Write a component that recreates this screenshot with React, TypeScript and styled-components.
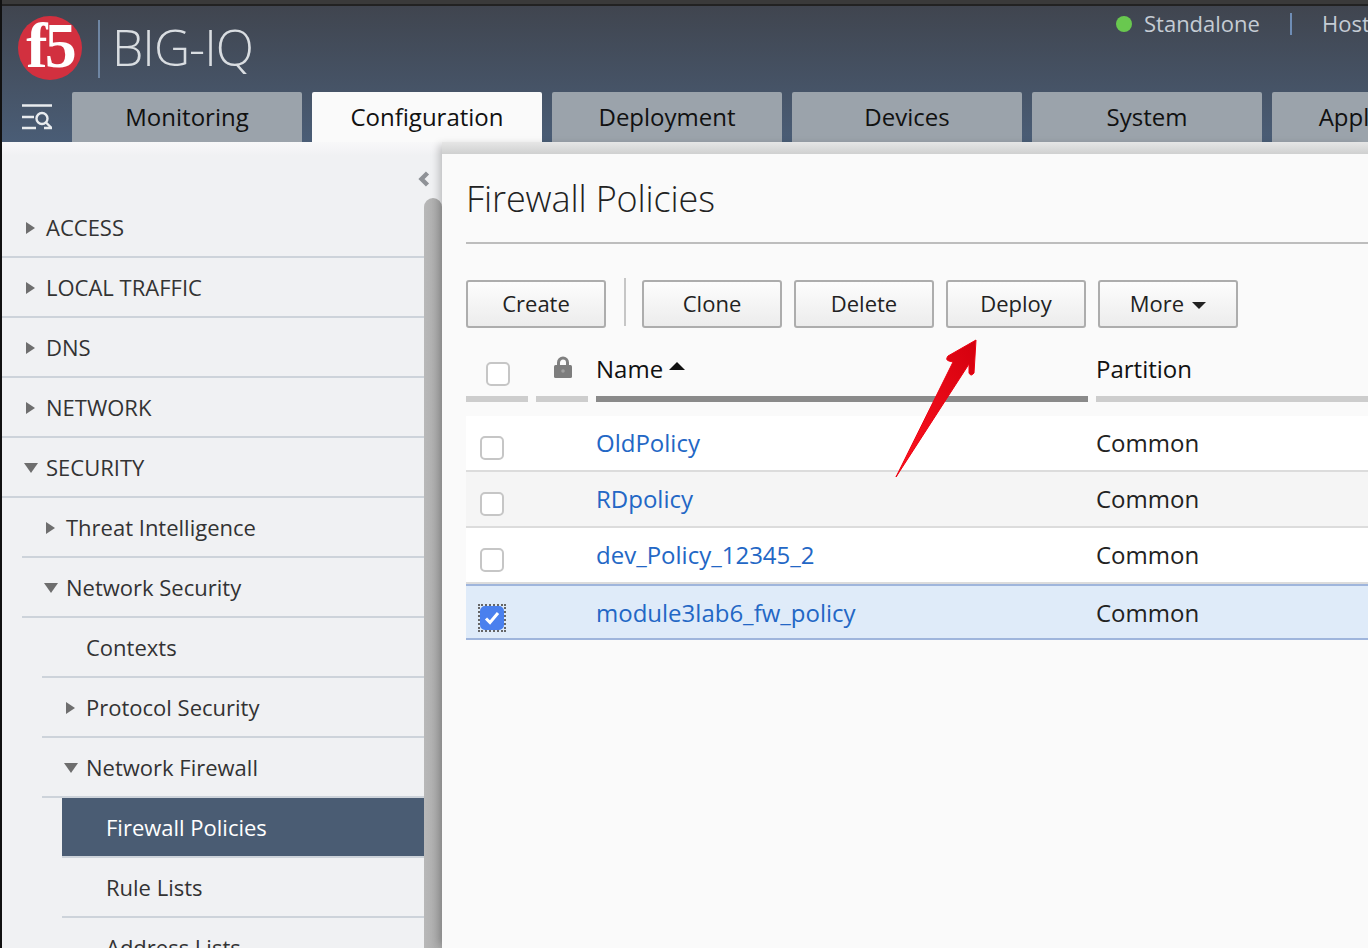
import styled, { createGlobalStyle } from "styled-components";

const GlobalStyle = createGlobalStyle`
  html, body {
    margin: 0;
    padding: 0;
    background: #fafafa;
    font-family: "Open Sans", "Noto Sans", sans-serif;
  }
  * {
    box-sizing: border-box;
  }
`;

const Page = styled.div`
  position: relative;
  width: 1368px;
  height: 948px;
  overflow: hidden;
  display: flex;
  flex-direction: column;
  border-left: 2px solid #111;
`;

const TopEdge = styled.div`
  flex: 0 0 6px;
  background: linear-gradient(#3a3a3a 0, #3a3a3a 60%, #222 60%, #222 100%);
`;

const Header = styled.header`
  flex: 0 0 136px;
  display: flex;
  flex-direction: column;
  background: linear-gradient(#40454f, #4a5d76);
`;

const HeaderTop = styled.div`
  flex: 0 0 86px;
  display: flex;
`;

const Brand = styled.div`
  flex: 0 0 1114px;
  display: flex;
  align-items: flex-start;
  padding: 10px 0 0 16px;
`;

const LogoCircle = styled.div`
  width: 64px;
  height: 64px;
  border-radius: 50%;
  background: #d2303f;
  color: #fff;
  font-family: "Liberation Serif", serif;
  font-weight: 700;
  font-size: 64px;
  letter-spacing: -3px;
  line-height: 60px;
  text-align: center;
`;

const BrandDivider = styled.div`
  width: 2px;
  height: 58px;
  margin: 4px 0 0 16px;
  background: #6f86a3;
`;

const BrandName = styled.div`
  margin-left: 12px;
  font-size: 50px;
  font-weight: 300;
  line-height: 62px;
  letter-spacing: -1px;
  color: #d9dde1;
`;

const Status = styled.div`
  display: flex;
  align-items: center;
  height: 24px;
  margin-top: 5px;
  color: #c5ccd4;
  font-size: 22px;
  white-space: nowrap;
`;

const StatusDot = styled.span`
  width: 16px;
  height: 16px;
  border-radius: 50%;
  background: #69c84f;
  margin: 2px 12px 0 0;
`;

const StatusDivider = styled.span`
  width: 2px;
  height: 22px;
  margin: 2px 30px 0;
  background: #6f8db5;
`;

const TabBar = styled.nav`
  flex: 0 0 50px;
  display: flex;
  gap: 10px;
`;

const MenuButton = styled.div`
  flex: 0 0 60px;
  padding: 12px 0 0 20px;
`;

const Tab = styled.div<{ $active?: boolean }>`
  flex: 0 0 230px;
  height: 50px;
  border-radius: 2px 2px 0 0;
  background: ${(p) => (p.$active ? "#fafafa" : "#9ba3ab")};
  color: #111;
  font-size: 24px;
  line-height: 50px;
  text-align: center;
  white-space: nowrap;
`;

const Body = styled.div`
  flex: 1;
  display: flex;
  min-height: 0;
`;

const Sidebar = styled.aside`
  flex: 0 0 440px;
  display: flex;
  flex-direction: column;
  background: linear-gradient(#f8f8f9 0, #f0f1f3 14px);
`;

const CollapseBar = styled.div`
  flex: 0 0 56px;
  display: flex;
  justify-content: flex-end;
  padding: 29px 12px 0 0;
`;

const SidebarBody = styled.div`
  flex: 1;
  display: flex;
  min-height: 0;
`;

const Nav = styled.div`
  flex: 0 0 422px;
  overflow: hidden;
`;

const NavRow = styled.div<{ $level: number; $selected?: boolean }>`
  display: flex;
  align-items: center;
  height: 60px;
  margin-left: ${(p) => p.$level * 20}px;
  padding-left: 24px;
  border-bottom: 2px solid #cdd3da;
  background: ${(p) => (p.$selected ? "#4a5c73" : "transparent")};
  color: ${(p) => (p.$selected ? "#fff" : "#333")};
  font-size: 22px;
  white-space: nowrap;
`;

const CaretSlot = styled.span`
  flex: 0 0 20px;
  display: flex;
  align-items: center;
  padding-top: 2px;
`;

const Caret = styled.span<{ $open?: boolean }>`
  width: 0;
  height: 0;
  ${(p) =>
    p.$open
      ? `
    margin-left: -2px;
    border-left: 7px solid transparent;
    border-right: 7px solid transparent;
    border-top: 10px solid #6e6e6e;
  `
      : `
    border-top: 6px solid transparent;
    border-bottom: 6px solid transparent;
    border-left: 9px solid #6e6e6e;
  `}
`;

const ScrollThumb = styled.div`
  flex: 0 0 18px;
  border-radius: 9px 9px 0 0;
  background: linear-gradient(90deg, #b8b8b8, #a9a9a9);
`;

const Panel = styled.main`
  flex: 1;
  min-width: 0;
  display: flex;
  flex-direction: column;
  background: #fafafa;
  box-shadow: -6px 0 8px -3px rgba(0, 0, 0, 0.22);
`;

const PanelTopShade = styled.div`
  flex: 0 0 12px;
  background: linear-gradient(#e6e6e6, #cfd0d0);
`;

const PanelContent = styled.div`
  padding: 0 0 0 24px;
`;

const Title = styled.h1`
  margin: 0;
  height: 90px;
  padding: 20px 0 0;
  border-bottom: 2px solid #bdbdbd;
  font-size: 36px;
  font-weight: 300;
  line-height: 50px;
  letter-spacing: -0.12px;
  color: #222;
`;

const Toolbar = styled.div`
  display: flex;
  align-items: flex-start;
  gap: 12px;
  margin-top: 36px;
`;

const ToolButton = styled.button`
  flex: 0 0 140px;
  height: 48px;
  padding: 0 0 2px;
  border: 2px solid #adadad;
  border-radius: 3px;
  background: linear-gradient(#fdfdfd, #ececec);
  color: #222;
  font-family: inherit;
  font-size: 22px;
`;

const ToolSeparator = styled.div`
  width: 2px;
  height: 48px;
  margin: -2px 4px 0 6px;
  background: #c6c6c6;
`;

const MoreCaret = styled.span`
  display: inline-block;
  margin-left: 8px;
  vertical-align: 3px;
  border-left: 7px solid transparent;
  border-right: 7px solid transparent;
  border-top: 7px solid #222;
`;

const Columns = "62px 52px 492px 1fr";

const HeadRow = styled.div`
  display: grid;
  grid-template-columns: ${Columns};
  column-gap: 8px;
  height: 74px;
  margin-bottom: 14px;
`;

const HeadCell = styled.div<{ $sorted?: boolean }>`
  display: flex;
  align-items: center;
  padding-top: 12px;
  border-bottom: 6px solid ${(p) => (p.$sorted ? "#8a8a8a" : "#cdcdcd")};
  color: #111;
  font-size: 24px;
`;

const HeadCheckCell = styled(HeadCell)`
  justify-content: center;
  padding: 24px 0 0 2px;
`;

const LockCell = styled(HeadCell)`
  justify-content: center;
  padding: 10px 0 0 2px;
`;

const SortCaret = styled.span`
  margin: 0 0 5px 6px;
  border-left: 8px solid transparent;
  border-right: 8px solid transparent;
  border-bottom: 8px solid #111;
`;

const Row = styled.div<{ $variant?: "odd" | "even" | "selected" }>`
  display: grid;
  grid-template-columns: ${Columns};
  column-gap: 8px;
  align-items: center;
  height: 56px;
  padding-bottom: ${(p) => (p.$variant === "selected" ? 0 : 2)}px;
  border-bottom: 2px solid ${(p) => (p.$variant === "selected" ? "#9fb5dc" : "#dcdcdc")};
  ${(p) => p.$variant === "selected" && "border-top: 2px solid #9fb5dc;"}
  background: ${(p) =>
    p.$variant === "selected" ? "#dfebf9" : p.$variant === "even" ? "#f5f5f5" : "#fff"};
  font-size: 24px;
  color: #222;
`;

const RowCheckCell = styled.div`
  display: flex;
  padding: 12px 0 0 14px;
`;

const FocusRing = styled.span`
  display: flex;
  outline: 2px dotted #666;
`;

const CheckBox = styled.span<{ $checked?: boolean }>`
  display: flex;
  align-items: center;
  justify-content: center;
  width: 24px;
  height: 24px;
  border-radius: 5px;
  border: 2px solid ${(p) => (p.$checked ? "#4a80ee" : "#c6c6c6")};
  background: ${(p) => (p.$checked ? "#4a80ee" : "#fff")};
`;

const PolicyLink = styled.a`
  color: #2367c5;
  text-decoration: none;
`;

const Arrow = styled.svg`
  position: absolute;
  left: 890px;
  top: 336px;
  pointer-events: none;
`;

const navItems = [
  { label: "ACCESS", level: 0, caret: "closed" },
  { label: "LOCAL TRAFFIC", level: 0, caret: "closed" },
  { label: "DNS", level: 0, caret: "closed" },
  { label: "NETWORK", level: 0, caret: "closed" },
  { label: "SECURITY", level: 0, caret: "open" },
  { label: "Threat Intelligence", level: 1, caret: "closed" },
  { label: "Network Security", level: 1, caret: "open" },
  { label: "Contexts", level: 2 },
  { label: "Protocol Security", level: 2, caret: "closed" },
  { label: "Network Firewall", level: 2, caret: "open" },
  { label: "Firewall Policies", level: 3, selected: true },
  { label: "Rule Lists", level: 3 },
  { label: "Address Lists", level: 3 },
];

const tabs = ["Monitoring", "Configuration", "Deployment", "Devices", "System", "Applications"];

const policies = [
  { name: "OldPolicy", variant: "odd" },
  { name: "RDpolicy", variant: "even" },
  { name: "dev_Policy_12345_2", variant: "odd" },
  { name: "module3lab6_fw_policy", variant: "selected" },
] as const;

function App() {
  return (
    <Page>
      <GlobalStyle />
      <TopEdge />
      <Header>
        <HeaderTop>
          <Brand>
            <LogoCircle>f5</LogoCircle>
            <BrandDivider />
            <BrandName>BIG-IQ</BrandName>
          </Brand>
          <Status>
            <StatusDot />
            Standalone
            <StatusDivider />
            Hostname
          </Status>
        </HeaderTop>
        <TabBar>
          <MenuButton>
            <svg width="30" height="26" viewBox="0 0 30 26" fill="none" stroke="#e8ebee" strokeWidth="2.4">
              <path d="M0 1.5h30M0 13h12M0 24h14M22 24h8" />
              <circle cx="20" cy="14.5" r="5.5" />
              <path d="M24 18.5l5 5" />
            </svg>
          </MenuButton>
          {tabs.map((tab) => (
            <Tab key={tab} $active={tab === "Configuration"}>
              {tab}
            </Tab>
          ))}
        </TabBar>
      </Header>
      <Body>
        <Sidebar>
          <CollapseBar>
            <svg width="12" height="16" viewBox="0 0 12 16">
              <path d="M9.5 2L3.5 8L9.5 14" fill="none" stroke="#8f9297" strokeWidth="4.4" />
            </svg>
          </CollapseBar>
          <SidebarBody>
            <Nav>
              {navItems.map((item) => (
                <NavRow key={item.label} $level={item.level} $selected={item.selected}>
                  <CaretSlot>{item.caret && <Caret $open={item.caret === "open"} />}</CaretSlot>
                  {item.label}
                </NavRow>
              ))}
            </Nav>
            <ScrollThumb />
          </SidebarBody>
        </Sidebar>
        <Panel>
          <PanelTopShade />
          <PanelContent>
            <Title>Firewall Policies</Title>
            <Toolbar>
              <ToolButton>Create</ToolButton>
              <ToolSeparator />
              <ToolButton>Clone</ToolButton>
              <ToolButton>Delete</ToolButton>
              <ToolButton>Deploy</ToolButton>
              <ToolButton>
                More
                <MoreCaret />
              </ToolButton>
            </Toolbar>
            <HeadRow>
              <HeadCheckCell>
                <CheckBox />
              </HeadCheckCell>
              <LockCell>
                <svg width="18" height="22" viewBox="0 0 18 22">
                  <path d="M4.5 10V6.5a4.5 4.5 0 0 1 9 0V10" fill="none" stroke="#808080" strokeWidth="3" />
                  <rect x="0" y="9" width="18" height="13" rx="1.5" fill="#7d7d7d" />
                  <circle cx="9" cy="15" r="1.8" fill="#a0a0a0" />
                </svg>
              </LockCell>
              <HeadCell $sorted>
                Name
                <SortCaret />
              </HeadCell>
              <HeadCell>Partition</HeadCell>
            </HeadRow>
            {policies.map((policy) => (
              <Row key={policy.name} $variant={policy.variant}>
                <RowCheckCell>
                  {policy.variant === "selected" ? (
                    <FocusRing>
                      <CheckBox $checked>
                        <svg width="16" height="14" viewBox="0 0 16 14" fill="none" stroke="#fff" strokeWidth="3">
                          <path d="M2 7.5l4 4L14 2" />
                        </svg>
                      </CheckBox>
                    </FocusRing>
                  ) : (
                    <CheckBox />
                  )}
                </RowCheckCell>
                <span />
                <PolicyLink href="#">{policy.name}</PolicyLink>
                <span>Common</span>
              </Row>
            ))}
          </PanelContent>
        </Panel>
      </Body>
      <Arrow width="90" height="146" viewBox="0 0 90 146">
        <defs>
          <linearGradient id="arrowFill" x1="0" y1="1" x2="1" y2="0">
            <stop offset="0" stopColor="#ff1420" />
            <stop offset="1" stopColor="#d4000e" />
          </linearGradient>
        </defs>
        <path
          d="M84 4L56 20Q53 24 57 25L61 26L4 141L77 28L77 37Q79 41 82 37Z"
          fill="url(#arrowFill)"
          stroke="#ec0010"
          strokeWidth="1"
          strokeLinejoin="round"
        />
      </Arrow>
    </Page>
  );
}

export default App;
